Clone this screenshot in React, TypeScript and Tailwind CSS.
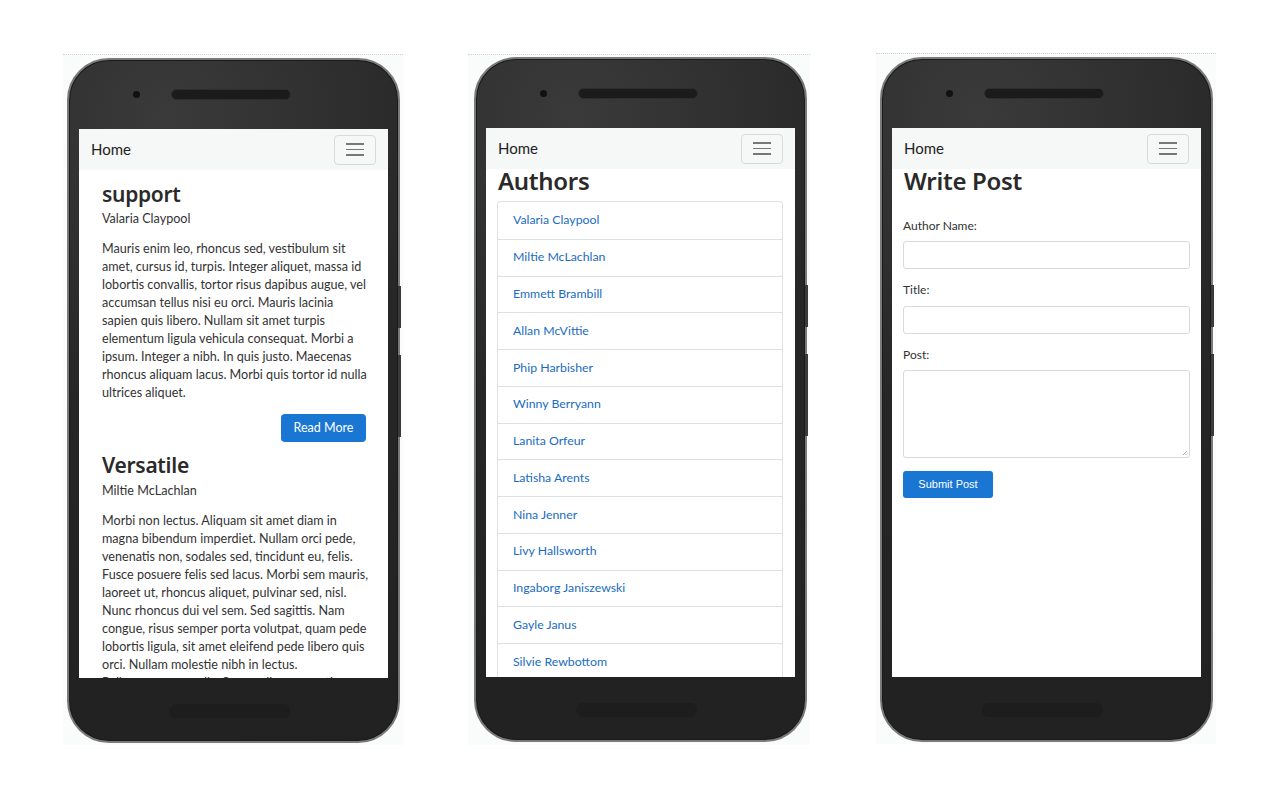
import React from "react";

const body = "font-['Lato','Noto_Sans',sans-serif]";
const head = "font-['Noto_Sans','Open_Sans',sans-serif] font-semibold tracking-[-0.3px]";

function Phone({ children, wide }: { children: React.ReactNode; wide?: boolean }) {
  return (
    <div
      className={`${wide ? "w-[342px] pl-[6px] pt-[2px]" : "w-[340px] pl-[4px] pt-[3px]"} h-[691px] bg-[#fafbfb] border-t border-dotted border-[#cfd4d6]`}
    >
      <div className="relative w-[333px] h-[685px] rounded-[42px] border-2 border-[#7a7a7a] bg-[#2a2a2a] bg-[radial-gradient(circle_at_30%_8%,#3a3a3a,#262626_45%,#212121)] shadow-[inset_0_0_0_1px_#1a1a1a]">
        <div className="absolute right-[-3px] top-[226px] w-[3px] h-[42px] bg-[#3a3a3a]" />
        <div className="absolute right-[-3px] top-[295px] w-[3px] h-[82px] bg-[#3a3a3a]" />
        <div className="flex items-center h-[69px] pl-[64px]">
          <div className="w-[7px] h-[7px] rounded-full bg-[#111]" />
          <div className="ml-[31px] w-[120px] h-[11px] rounded-full bg-[#1b1b1b] border border-[#2e2e2e]" />
        </div>
        <div className="ml-[10px] w-[309px] h-[549px] bg-white overflow-hidden">{children}</div>
        <div className="flex justify-center pt-[26px] pr-[8px]">
          <div className="w-[121px] h-[14px] rounded-full bg-[#1d1d1d]" />
        </div>
      </div>
    </div>
  );
}

function Navbar() {
  return (
    <div className="h-[41px] bg-[#f6f7f7] flex items-center justify-between pl-[12px] pr-[12px]">
      <span className={`${body} text-[15px] text-[#222]`}>Home</span>
      <div className="w-[42px] h-[30px] rounded-[4px] border border-[#d8dbdd] flex flex-col items-center justify-center gap-[4px]">
        <div className="w-[18px] h-[1.5px] bg-[#777]" />
        <div className="w-[18px] h-[1.5px] bg-[#777]" />
        <div className="w-[18px] h-[1.5px] bg-[#777]" />
      </div>
    </div>
  );
}

const p1 = [
  "Mauris enim leo, rhoncus sed, vestibulum sit",
  "amet, cursus id, turpis. Integer aliquet, massa id",
  "lobortis convallis, tortor risus dapibus augue, vel",
  "accumsan tellus nisi eu orci. Mauris lacinia",
  "sapien quis libero. Nullam sit amet turpis",
  "elementum ligula vehicula consequat. Morbi a",
  "ipsum. Integer a nibh. In quis justo. Maecenas",
  "rhoncus aliquam lacus. Morbi quis tortor id nulla",
  "ultrices aliquet.",
];
const p2 = [
  "Morbi non lectus. Aliquam sit amet diam in",
  "magna bibendum imperdiet. Nullam orci pede,",
  "venenatis non, sodales sed, tincidunt eu, felis.",
  "Fusce posuere felis sed lacus. Morbi sem mauris,",
  "laoreet ut, rhoncus aliquet, pulvinar sed, nisl.",
  "Nunc rhoncus dui vel sem. Sed sagittis. Nam",
  "congue, risus semper porta volutpat, quam pede",
  "lobortis ligula, sit amet eleifend pede libero quis",
  "orci. Nullam molestie nibh in lectus.",
  "Pellentesque at nulla. Suspendisse potenti.",
];

function Para({ lines }: { lines: string[] }) {
  return (
    <p className={`${body} text-[12.6px] leading-[18px] text-[#333] whitespace-nowrap`}>
      {lines.map((l, i) => (
        <React.Fragment key={i}>
          {l}
          {i < lines.length - 1 && <br />}
        </React.Fragment>
      ))}
    </p>
  );
}

function Posts() {
  return (
    <div>
      <Navbar />
      <div className="pl-[23px] pr-[22px]">
        <h2 className={`${head} mt-[11px] text-[21px] leading-[26px] text-[#2a2a2a]`}>support</h2>
        <div className={`${body} mt-[3px] text-[12.6px] leading-[18px] text-[#333]`}>Valaria Claypool</div>
        <div className="mt-[12px]">
          <Para lines={p1} />
        </div>
        <div className="flex justify-end mt-[12px]">
          <button className={`${body} w-[85px] h-[28px] rounded-[4px] bg-[#1976d2] text-white text-[12.5px]`}>Read More</button>
        </div>
        <h2 className={`${head} mt-[10px] text-[21px] leading-[26px] text-[#2a2a2a]`}>Versatile</h2>
        <div className={`${body} mt-[4px] text-[12.6px] leading-[18px] text-[#333]`}>Miltie McLachlan</div>
        <div className="mt-[12px]">
          <Para lines={p2} />
        </div>
      </div>
    </div>
  );
}

const authors = [
  "Valaria Claypool",
  "Miltie McLachlan",
  "Emmett Brambill",
  "Allan McVittie",
  "Phip Harbisher",
  "Winny Berryann",
  "Lanita Orfeur",
  "Latisha Arents",
  "Nina Jenner",
  "Livy Hallsworth",
  "Ingaborg Janiszewski",
  "Gayle Janus",
  "Silvie Rewbottom",
];

function Authors() {
  return (
    <div>
      <Navbar />
      <div className="pl-[11px] pr-[12px]">
        <h2 className={`${head} text-[24px] leading-[24px] text-[#2a2a2a] pl-[1px]`}>Authors</h2>
        <div className="mt-[8px] border border-[#dde1e4] rounded-[3px]">
          {authors.map((a, i) => (
            <div
              key={a}
              className={`h-[36.75px] flex items-center pl-[15px] ${i > 0 ? "border-t border-[#dde1e4]" : ""}`}
            >
              <span className={`${body} text-[12.3px] text-[#1a6cc2]`}>{a}</span>
            </div>
          ))}
        </div>
      </div>
    </div>
  );
}

function WritePost() {
  const label = `${body} text-[12px] leading-[16px] text-[#333]`;
  const input = "w-full border border-[#d6dadd] rounded-[3px] bg-white";
  return (
    <div>
      <Navbar />
      <div className="pl-[11px] pr-[11px]">
        <h2 className={`${head} text-[24px] leading-[24px] text-[#2a2a2a] pl-[1px]`}>Write Post</h2>
        <div className={`${label} mt-[25px]`}>Author Name:</div>
        <div className={`${input} h-[28px] mt-[7px]`} />
        <div className={`${label} mt-[13px]`}>Title:</div>
        <div className={`${input} h-[28px] mt-[8px]`} />
        <div className={`${label} mt-[13px]`}>Post:</div>
        <div className={`${input} h-[88px] mt-[7px] relative`}>
          <svg className="absolute right-[1px] bottom-[1px]" width="6" height="6" viewBox="0 0 6 6">
            <path d="M5 1L1 5M5 3.5L3.5 5" stroke="#999" strokeWidth="0.8" />
          </svg>
        </div>
        <button className="mt-[13px] w-[90px] h-[27px] rounded-[3px] bg-[#1976d2] text-white text-[11px] font-['Liberation_Sans',Arial,sans-serif]">
          Submit Post
        </button>
      </div>
    </div>
  );
}

export default function App() {
  return (
    <div className="w-[1280px] h-[800px] bg-white flex pt-[54px] pl-[63px]">
      <Phone>
        <Posts />
      </Phone>
      <div className="ml-[65px]">
        <Phone wide>
          <Authors />
        </Phone>
      </div>
      <div className="ml-[66px] -mt-[1px]">
        <Phone>
          <WritePost />
        </Phone>
      </div>
    </div>
  );
}
